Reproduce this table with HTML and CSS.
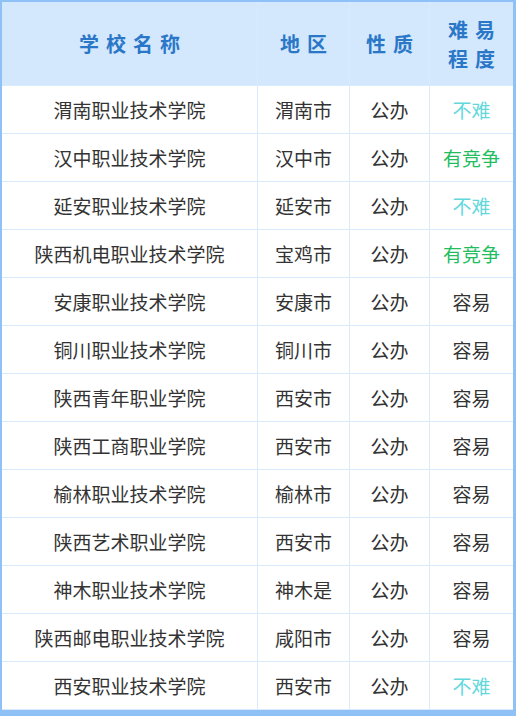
FILE: index.html
```html
<!DOCTYPE html>
<html lang="zh">
<head>
<meta charset="utf-8">
<link rel="stylesheet" href="styles.css">
</head>
<body>
<div class="frame">
  <div class="grid">
    <div class="th"><span class="sp">学校名称</span></div>
    <div class="th"><span class="sp">地区</span></div>
    <div class="th"><span class="sp">性质</span></div>
    <div class="th two"><span class="sp">难易</span><span class="sp">程度</span></div>

    <div class="td">渭南职业技术学院</div><div class="td">渭南市</div><div class="td">公办</div><div class="td easy">不难</div>
    <div class="td">汉中职业技术学院</div><div class="td">汉中市</div><div class="td">公办</div><div class="td comp">有竞争</div>
    <div class="td">延安职业技术学院</div><div class="td">延安市</div><div class="td">公办</div><div class="td easy">不难</div>
    <div class="td">陕西机电职业技术学院</div><div class="td">宝鸡市</div><div class="td">公办</div><div class="td comp">有竞争</div>
    <div class="td">安康职业技术学院</div><div class="td">安康市</div><div class="td">公办</div><div class="td">容易</div>
    <div class="td">铜川职业技术学院</div><div class="td">铜川市</div><div class="td">公办</div><div class="td">容易</div>
    <div class="td">陕西青年职业学院</div><div class="td">西安市</div><div class="td">公办</div><div class="td">容易</div>
    <div class="td">陕西工商职业学院</div><div class="td">西安市</div><div class="td">公办</div><div class="td">容易</div>
    <div class="td">榆林职业技术学院</div><div class="td">榆林市</div><div class="td">公办</div><div class="td">容易</div>
    <div class="td">陕西艺术职业学院</div><div class="td">西安市</div><div class="td">公办</div><div class="td">容易</div>
    <div class="td">神木职业技术学院</div><div class="td">神木是</div><div class="td">公办</div><div class="td">容易</div>
    <div class="td">陕西邮电职业技术学院</div><div class="td">咸阳市</div><div class="td">公办</div><div class="td">容易</div>
    <div class="td">西安职业技术学院</div><div class="td">西安市</div><div class="td">公办</div><div class="td easy">不难</div>
  </div>
</div>
</body>
</html>
```
FILE: styles.css
```css
html, body {
  margin: 0;
  padding: 0;
}
body {
  width: 516px;
  height: 716px;
  overflow: hidden;
  font-family: "Noto Sans CJK SC", "Noto Sans", sans-serif;
}
.frame {
  background: #8fc1f6;
  padding: 2px 3px 6px 2px;
  height: 716px;
  box-sizing: border-box;
}
.grid {
  display: grid;
  grid-template-columns: 255px 91px 79px 83px;
  grid-template-rows: 83px repeat(13, 47px);
  gap: 1px;
  background: #d9eafc;
  padding-bottom: 1px;
}
.th {
  background: #d3e7fd;
  color: #2a77c8;
  font-weight: 700;
  font-size: 20px;
  display: flex;
  flex-direction: column;
  align-items: center;
  justify-content: center;
  line-height: 29px;
}
.sp {
  letter-spacing: 7px;
  padding-left: 7px;
}
.td {
  background: #ffffff;
  color: #333333;
  font-size: 19px;
  display: flex;
  align-items: center;
  justify-content: center;
}
.easy {
  color: #62d8dd;
}
.comp {
  color: #22bd5e;
}
```
